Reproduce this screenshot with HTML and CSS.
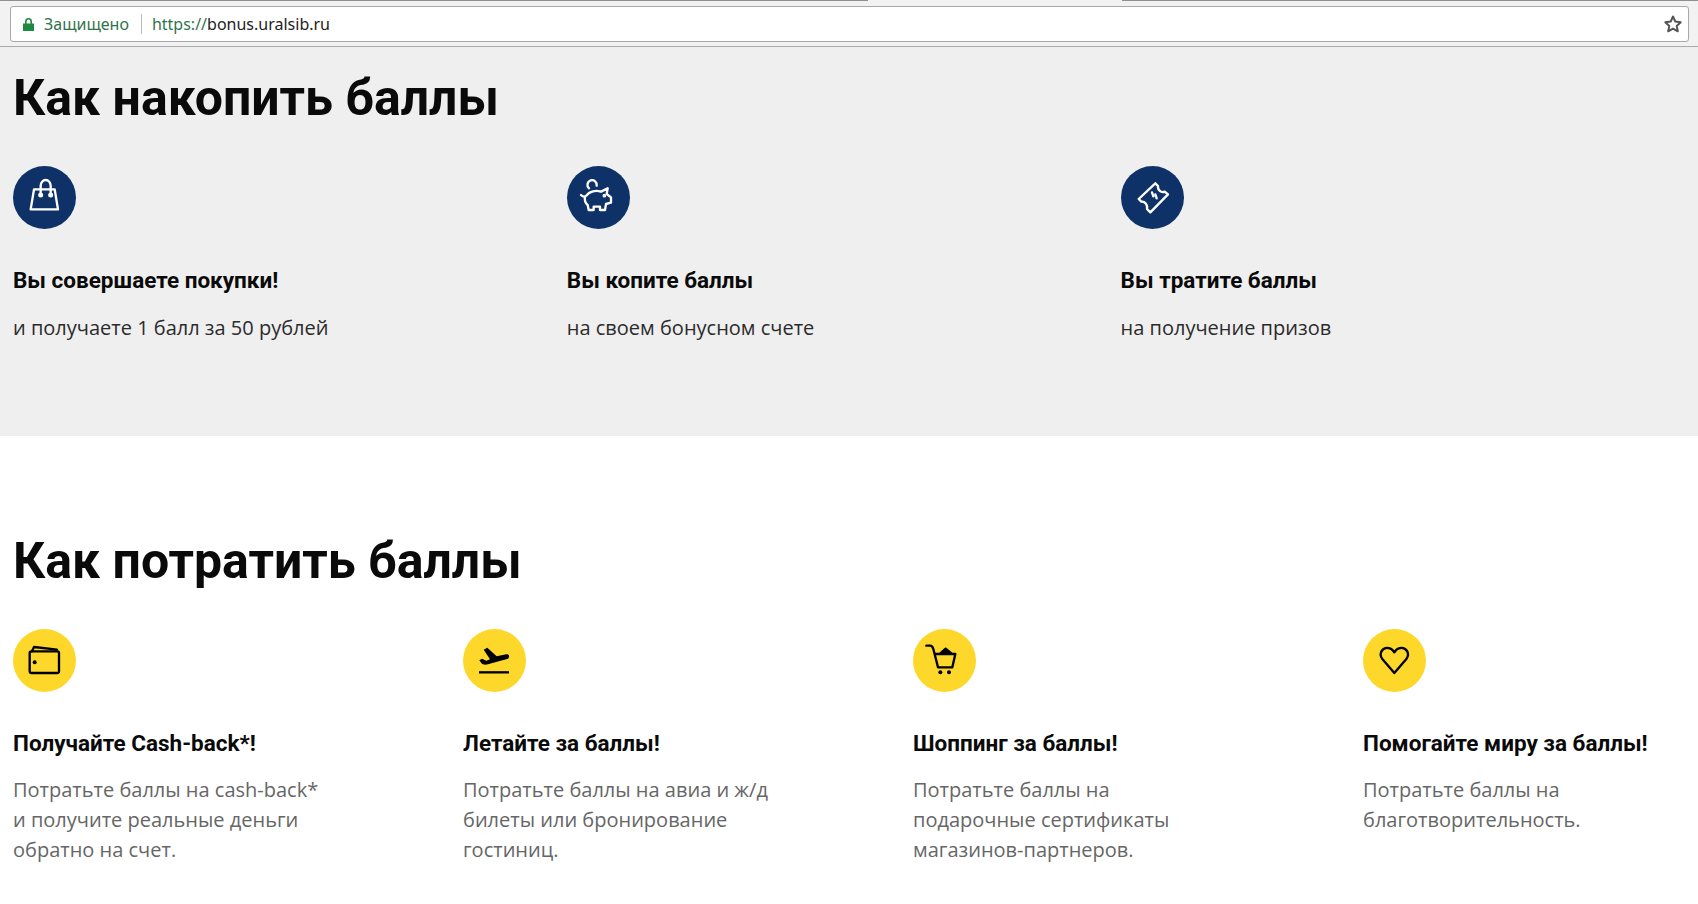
FILE: index.html
```html
<!DOCTYPE html>
<html lang="ru">
<head>
<meta charset="utf-8">
<title>Бонус Уралсиб</title>
<link rel="stylesheet" href="styles.css">
</head>
<body>
<header class="chrome">
  <div class="tabline"><span class="tab-gap"></span></div>
  <div class="omnibox">
    <svg class="lock" viewBox="0 0 11 13"><path d="M0 5.500h11V13H0z M2 5.500V3.500a3.500 3.500 0 0 1 7 0v2H7.400V3.500a1.900 1.900 0 0 0-3.800 0v2z" fill="#1d8a3f" fill-rule="evenodd"/></svg>
    <span class="secure">Защищено</span>
    <span class="sep"></span>
    <span class="url"><span class="scheme">https://</span>bonus.uralsib.ru</span>
    <svg class="star" viewBox="0 0 20 20"><path d="M10 2.500l2.300 5 5.400.7-4 3.700 1.100 5.400-4.800-2.700-4.800 2.700 1.100-5.400-4-3.700 5.400-.7z" fill="none" stroke="#555" stroke-width="2" stroke-linejoin="round"/></svg>
  </div>
</header>

<section class="band earn">
  <h1>Как накопить баллы</h1>
  <div class="cols cols-3">
    <article class="item">
      <div class="badge navy">
        <svg viewBox="35 33 189 189" fill="none" stroke="#fff" stroke-width="7" stroke-linecap="round" stroke-linejoin="round"><path d="M98 103H160L170 163H88Z"/><path d="M118 120V92a15 17 0 0 1 30 0V120"/><circle cx="118" cy="120" r="4" fill="#fff"/><circle cx="148" cy="120" r="4" fill="#fff"/></svg>
      </div>
      <h2>Вы совершаете покупки!</h2>
      <p class="dark">и получаете 1 балл за 50 рублей</p>
    </article>
    <article class="item">
      <div class="badge navy">
        <svg viewBox="38 33 189 189" fill="none" stroke="#fff" stroke-width="7" stroke-linecap="round" stroke-linejoin="round"><path d="M80 120C88 128 92 125 96 122C105 108 125 105 140 110L160 100L157 117L170 127V143L155 147L152 165H137V155H118V165H103L100 150C92 143 90 135 92 125"/><path d="M104 100A14 14 0 1 1 127 92"/><circle cx="150" cy="122" r="2" fill="#fff"/></svg>
      </div>
      <h2>Вы копите баллы</h2>
      <p class="dark">на своем бонусном счете</p>
    </article>
    <article class="item">
      <div class="badge navy">
        <svg viewBox="37 33 189 189" fill="none" stroke="#fff" stroke-width="7" stroke-linecap="round" stroke-linejoin="round"><path d="M140 85L148 93C146 105 158 115 168 110L178 118L125 172L115 162C118 150 108 138 98 140L90 132Z"/><path d="M130 112L134 124M140 118L144 130"/></svg>
      </div>
      <h2>Вы тратите баллы</h2>
      <p class="dark">на получение призов</p>
    </article>
  </div>
</section>

<section class="band spend">
  <h1>Как потратить баллы</h1>
  <div class="cols cols-4">
    <article class="item">
      <div class="badge yellow">
        <svg viewBox="40 28 189 189" fill="none" stroke="#000" stroke-width="7" stroke-linecap="round" stroke-linejoin="round"><rect x="90" y="95" width="88" height="65" rx="5"/><path d="M97 95L103 82L172 90"/><circle cx="105" cy="128" r="6" fill="#000" stroke="none"/></svg>
      </div>
      <h2>Получайте Cash-back*!</h2>
      <p>Потратьте баллы на cash-back*<br>и получите реальные деньги<br>обратно на счет.</p>
    </article>
    <article class="item">
      <div class="badge yellow">
        <svg viewBox="40 28 189 189"><path d="M88 158H178" stroke="#000" stroke-width="7" fill="none"/><path d="M102 90L113 84L141 110L170 104C179 103 181 112 175 117L115 134C105 137 98 134 95 130L89 122L97 117L110 123L121 119Z" fill="#000"/></svg>
      </div>
      <h2>Летайте за баллы!</h2>
      <p>Потратьте баллы на авиа и ж/д<br>билеты или бронирование<br>гостиниц.</p>
    </article>
    <article class="item">
      <div class="badge yellow">
        <svg viewBox="40 28 189 189" fill="none" stroke="#000" stroke-width="7" stroke-linecap="round" stroke-linejoin="round"><path d="M80 78H92C97 78 99 82 101 88L115 143H158L167 103H106"/><path d="M122 101L138 87L155 101Z" fill="#000"/><circle cx="122" cy="158" r="6" fill="#000" stroke="none"/><circle cx="148" cy="158" r="6" fill="#000" stroke="none"/></svg>
      </div>
      <h2>Шоппинг за баллы!</h2>
      <p>Потратьте баллы на<br>подарочные сертификаты<br>магазинов-партнеров.</p>
    </article>
    <article class="item">
      <div class="badge yellow">
        <svg viewBox="40 28 189 189" fill="none" stroke="#000" stroke-width="7" stroke-linejoin="round"><path d="M134 160L98 118C85 100 100 83 115 85C125 86 131 93 134 98C137 93 143 86 153 85C168 83 183 100 170 118Z"/></svg>
      </div>
      <h2>Помогайте миру за баллы!</h2>
      <p>Потратьте баллы на<br>благотворительность.</p>
    </article>
  </div>
</section>
</body>
</html>
```

FILE: styles.css
```css
* { box-sizing: border-box; }
html, body { margin: 0; padding: 0; }
body {
  background: #fff;
  color: #000;
  font-family: "Open Sans", sans-serif;
  overflow: hidden;
  height: 904px;
}
.chrome {
  height: 47px;
  background: #f2f2f2;
  border-bottom: 1px solid #a9a9a9;
  padding: 0 9px 0 10px;
}
.tabline {
  height: 6px;
  display: flex;
  justify-content: center;
  border-top: 1px solid #8f8f8f;
  margin: 0 -10px;
}
.tab-gap {
  width: 254px;
  height: 2px;
  margin: -1px 0 0 290px;
  background: #f2f2f2;
}
.omnibox {
  height: 36px;
  background: #fff;
  border: 1px solid #a8a8a8;
  border-radius: 3px;
  display: flex;
  align-items: center;
  padding: 0 5px 0 12px;
  font-family: "Noto Sans", sans-serif;
  font-size: 16px;
}
.lock { width: 11px; height: 13px; margin-right: 10px; }
.secure { color: #33734c; }
.sep { width: 1px; height: 20px; background: #b9b9b9; margin: 0 10px 0 12px; }
.url { color: #222; flex: 1; }
.scheme { color: #33734c; }
.star { width: 20px; height: 20px; }
.band { padding-left: 13px; padding-right: 13px; }
.earn { background: #efefef; height: 389px; padding-top: 19px; }
.spend { padding-top: 93px; }
h1 {
  margin: 0;
  font-family: Roboto, sans-serif;
  font-weight: 700;
  font-size: 50px;
  line-height: 64px;
  color: #0a0a0a;
}
.cols { display: grid; margin-top: 36px; }
.cols-3 { grid-template-columns: repeat(3, 553.8px); }
.cols-4 { grid-template-columns: repeat(3, 450px) 1fr; }
.badge {
  width: 63px;
  height: 63px;
  border-radius: 50%;
  display: flex;
  align-items: center;
  justify-content: center;
}
.badge svg { width: 63px; height: 63px; }
.navy { background: #0e3268; }
.yellow { background: #fdd82a; }
h2 {
  margin: 36px 0 0;
  font-family: Roboto, sans-serif;
  font-weight: 700;
  font-size: 22.5px;
  line-height: 30px;
  color: #0a0a0a;
}
p {
  margin: 17px 0 0;
  font-size: 20px;
  line-height: 30px;
  color: #666;
}
p.dark { margin-top: 18px; color: #2b2b2b; }
```
